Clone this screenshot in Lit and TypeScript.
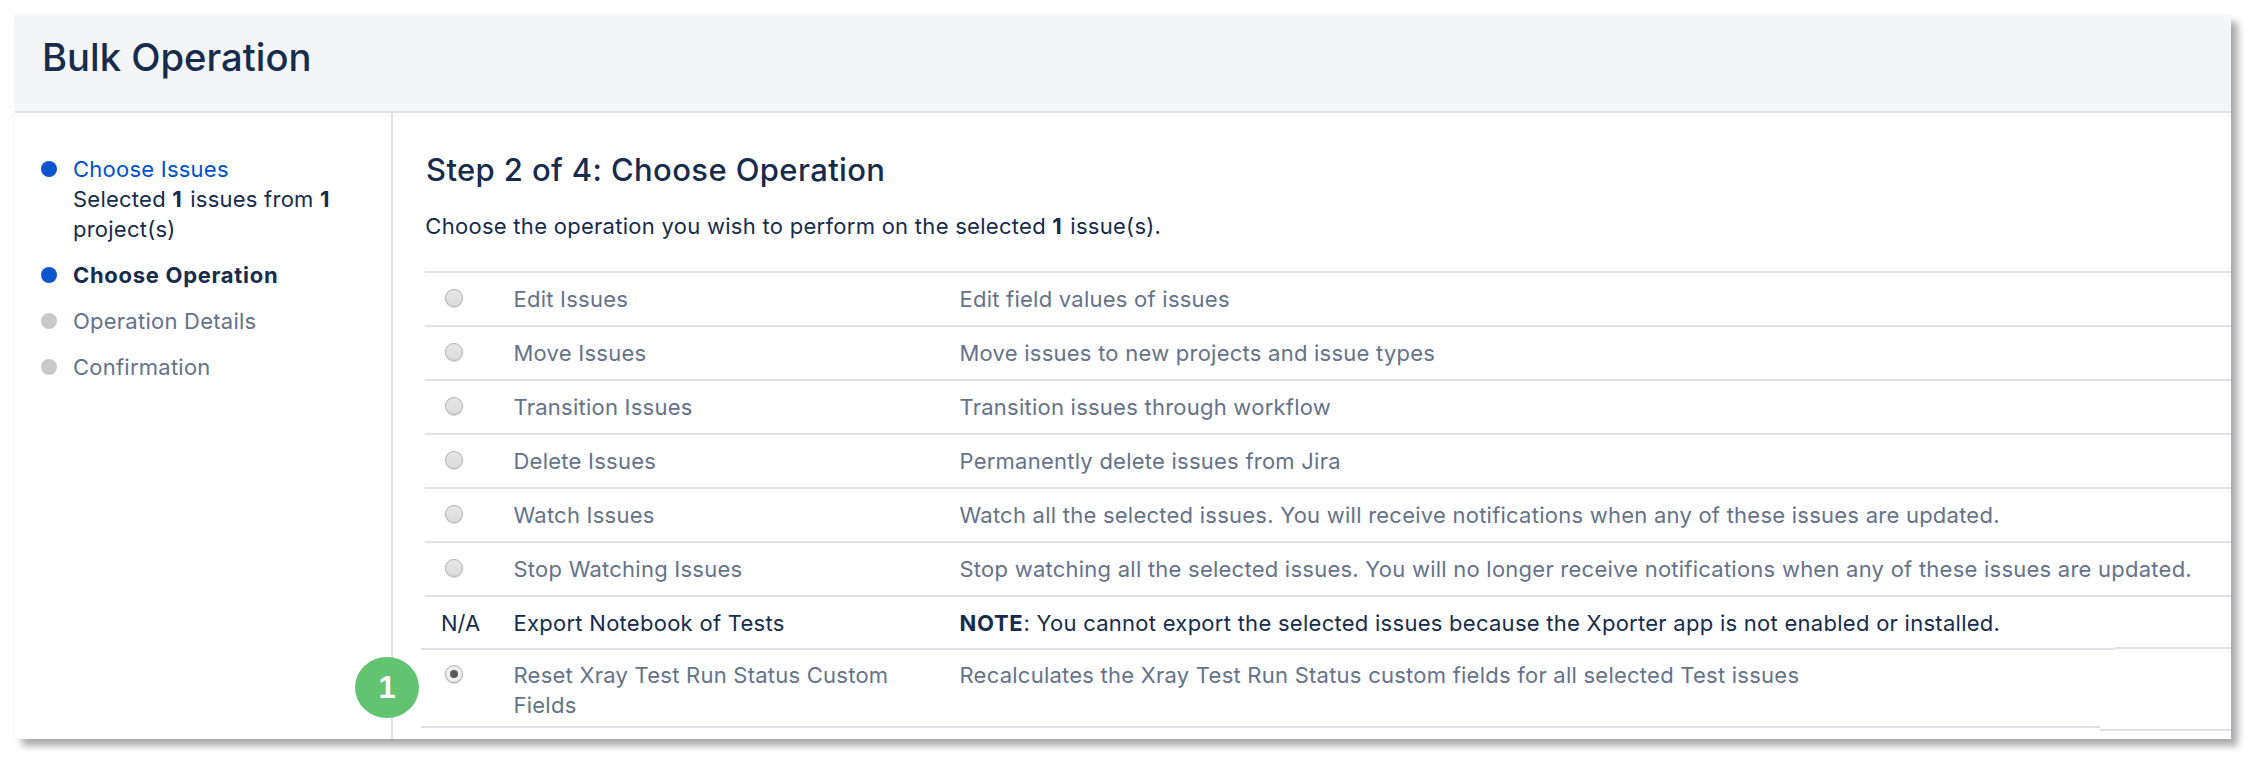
import { LitElement, html, css } from "lit";
import { customElement } from "lit/decorators.js";

const ROWS = [
  ["Edit Issues", "Edit field values of issues"],
  ["Move Issues", "Move issues to new projects and issue types"],
  ["Transition Issues", "Transition issues through workflow"],
  ["Delete Issues", "Permanently delete issues from Jira"],
  ["Watch Issues", "Watch all the selected issues. You will receive notifications when any of these issues are updated."],
  ["Stop Watching Issues", "Stop watching all the selected issues. You will no longer receive notifications when any of these issues are updated."],
];

@customElement("app-root")
export class AppRoot extends LitElement {
  static styles = css`
    :host { display: block; width: 2256px; height: 764px; background: #fff; font-family: Inter, "Noto Sans", sans-serif; font-size: 22px; letter-spacing: .24px; line-height: 30px; color: #172b4d; overflow: hidden; }
    * { box-sizing: border-box; }
    .panel { position: relative; margin: 15px; width: 2216px; height: 724px; background: #fff; display: flex; flex-direction: column; box-shadow: 7px 7px 7px rgba(0,0,0,.32), 0 0 6px rgba(0,0,0,.05); }
    .head { height: 98px; flex: none; background: #f4f5f7; border-bottom: 2px solid #dfe1e6; padding: 0 0 12px 27px; display: flex; align-items: center; }
    h1 { margin: 0; font-size: 38.2px; font-weight: 500; line-height: 44px; letter-spacing: 0; color: #172b4d; }
    .body { flex: 1; display: flex; min-height: 0; }
    .side { width: 378px; flex: none; border-right: 2px solid #dfe1e6; padding: 41px 0 0 26px; }
    .side ul { list-style: none; margin: 0; padding: 0; display: flex; flex-direction: column; gap: 16px; width: 310px; }
    .side li { display: flex; gap: 16px; }
    .dot { width: 16px; height: 16px; border-radius: 50%; margin-top: 7px; flex: none; background: #c9c9c9; }
    .dot.on { background: #0c55cf; }
    .link { color: #0052cc; }
    .muted { color: #65728a; }
    .main { flex: 1; padding: 39px 0 0 33px; min-width: 0; }
    h2 { margin: 0; font-size: 31px; font-weight: 500; line-height: 36px; letter-spacing: .38px; }
    p { margin: 23px 0 0 -.7px; letter-spacing: .28px; }
    .table { margin: 30px 0 0 -1px; }
    .row { display: grid; grid-template-columns: 88.5px 446px 1fr; border-top: 2px solid #dfe1e6; min-height: 54px; color: #65728a; align-items: start; }
    .row > div { padding-top: 11px; padding-right: 20px; }
    .row.na { color: #172b4d; min-height: 52px; letter-spacing: .27px; }
    .row.last { border-top: 0; min-height: 76px; margin-left: -4px; grid-template-columns: 92.5px 446px 1fr; }
    .row.last > div { padding-top: 10px; }
    .row.last .cell-r { padding-left: 24px; }
    .seam { display: flex; margin-left: -4px; }
    .seam i { display: block; height: 2px; background: #dfe1e6; }
    .seam i:last-child { flex: 1; }
    .s1 { height: 3px; align-items: flex-end; }
    .s1 i:first-child { width: 1694px; }
    .s1 i:last-child { align-self: flex-start; }
    .s2 { height: 5px; }
    .s2 i:first-child { width: 1679px; }
    .s2 i:last-child { align-self: flex-end; }
    .cell-r { padding-left: 20px; }
    .radio { display: flex; width: 18px; height: 18px; border-radius: 50%; margin-top: 5px; border: 1.5px solid #b0b0b0; background: linear-gradient(#e6e6e6, #dcdcdc); box-shadow: 0 1px 1px rgba(0,0,0,.16); align-items: center; justify-content: center; }
    .radio.on::after { content: ""; width: 8px; height: 8px; border-radius: 50%; background: #595959; }
    .radio.on { background: #eee; }
    .row .na-label { padding: 11px 0 0 16px; letter-spacing: 0; }
    b { font-weight: 700; letter-spacing: .7px; }
    .n { letter-spacing: 2px; }
    .badge { position: absolute; left: 340px; top: 642px; width: 64px; height: 61px; border-radius: 50%; background: #62c370; color: #fff; font-family: "Liberation Sans", sans-serif; font-weight: 700; font-size: 31px; letter-spacing: 0; display: flex; align-items: center; justify-content: center; }
  `;

  render() {
    return html`<div class="panel">
      <div class="head"><h1>Bulk Operation</h1></div>
      <div class="body">
        <div class="side"><ul>
          <li><span class="dot on"></span><div><span class="link">Choose Issues</span><br />Selected <b class="n">1</b> issues from <b class="n">1</b> project(s)</div></li>
          <li><span class="dot on"></span><b>Choose Operation</b></li>
          <li><span class="dot"></span><span class="muted">Operation Details</span></li>
          <li><span class="dot"></span><span class="muted">Confirmation</span></li>
        </ul></div>
        <div class="main">
          <h2>Step 2 of 4: Choose Operation</h2>
          <p>Choose the operation you wish to perform on the selected <b class="n">1</b> issue(s).</p>
          <div class="table">
            ${ROWS.map(([a, b]) => html`<div class="row"><div class="cell-r"><span class="radio"></span></div><div>${a}</div><div>${b}</div></div>`)}
            <div class="row na"><div class="na-label">N/A</div><div>Export Notebook of Tests</div><div><b>NOTE</b>: You cannot export the selected issues because the Xporter app is not enabled or installed.</div></div>
            <div class="seam s1"><i></i><i></i></div>
            <div class="row last"><div class="cell-r"><span class="radio on"></span></div><div>Reset Xray Test Run Status Custom Fields</div><div>Recalculates the Xray Test Run Status custom fields for all selected Test issues</div></div>
            <div class="seam s2"><i></i><i></i></div>
          </div>
        </div>
      </div>
      <div class="badge">1</div>
    </div>`;
  }
}
